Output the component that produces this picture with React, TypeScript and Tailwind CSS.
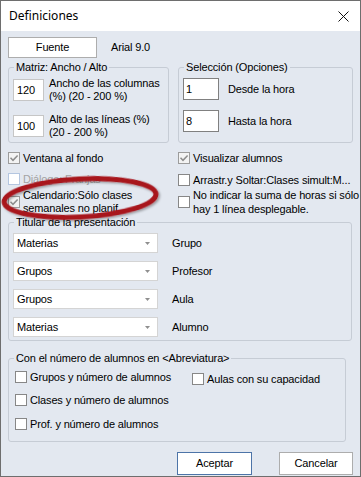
import React from "react";

// Small Windows-style checkbox. Three looks: unchecked, checked (greyed tick), disabled.
function Check({ checked, disabled }: { checked?: boolean; disabled?: boolean }) {
  const box = disabled
    ? "border-[#b4c6e0] bg-white"
    : checked
      ? "border-[#9c9c9c] bg-[#f3f3f3]"
      : "border-[#878787] bg-white";
  return (
    <span className={`flex size-[12px] shrink-0 items-center justify-center border ${box}`}>
      {checked && (
        <svg width="10" height="10" viewBox="0 0 10 10">
          <path d="M1.5 4.8 L4 7.3 L8.6 2.4" fill="none" stroke="#8d8d8d" strokeWidth="1.5" />
        </svg>
      )}
    </span>
  );
}

// Group box with the caption cut into the top border.
function GroupBox({
  title,
  className,
  children,
}: {
  title: string;
  className: string;
  children: React.ReactNode;
}) {
  return (
    <fieldset className={`rounded-[3px] border border-[#c6ccd5] ${className}`}>
      <legend className="ml-[5px] px-[2px] leading-[14px]">{title}</legend>
      {children}
    </fieldset>
  );
}

// Combo box look: white field, tiny grey arrow on the right.
function Combo({ value, label }: { value: string; label: string }) {
  return (
    <div className="flex items-center">
      <div className="flex h-[20px] w-[145px] items-center justify-between border border-[#d4d4d4] bg-white pl-[3px] pr-[7px]">
        <span>{value}</span>
        <svg width="5" height="3" viewBox="0 0 5 3">
          <path d="M0 0 H5 L2.5 3 Z" fill="#8f8f8f" />
        </svg>
      </div>
      <span className="ml-[14px]">{label}</span>
    </div>
  );
}

const TITLE_ROWS = [
  { value: "Materias", label: "Grupo" },
  { value: "Grupos", label: "Profesor" },
  { value: "Grupos", label: "Aula" },
  { value: "Materias", label: "Alumno" },
];

export default function App(): React.ReactElement {
  return (
    <div className="relative flex h-[477px] w-[361px] flex-col overflow-hidden whitespace-nowrap border border-[#6e6e6e] font-['Liberation_Sans',Arial,sans-serif] text-[11px] tracking-[-0.15px] text-black">
      {/* Title bar */}
      <div className="flex h-[30px] shrink-0 items-center justify-between bg-white pl-[8px] pr-[11px] font-['Noto_Sans',sans-serif] text-[12px] tracking-normal">
        <span>Definiciones</span>
        <svg width="11" height="11" viewBox="0 0 11 11">
          <path d="M0.5 0.5 L10.5 10.5 M10.5 0.5 L0.5 10.5" stroke="#111" strokeWidth="1" />
        </svg>
      </div>

      {/* Dialog body */}
      <div className="flex flex-1 flex-col bg-[#e3e8f0] pl-[7px] pr-[7px] pt-[6px]">
        <div className="flex items-center">
          <div className="flex h-[21px] w-[89px] items-center justify-center border border-[#adadad] bg-white">
            Fuente
          </div>
          <span className="ml-[14px]">Arial 9.0</span>
        </div>

        <div className="mt-[2px] flex">
          <GroupBox title="Matriz: Ancho / Alto" className="h-[83px] w-[161px]">
            <div className="flex flex-col pl-[4px] pt-[3px]">
              <div className="flex items-center">
                <div className="flex h-[22px] w-[31px] items-center border border-[#c6c6c6] bg-white pl-[3px]">120</div>
                <span className="ml-[5px] leading-[13px]">
                  Ancho de las columnas
                  <br />
                  (%) (20 - 200 %)
                </span>
              </div>
              <div className="mt-[10px] flex items-center">
                <div className="flex h-[22px] w-[31px] items-center border border-[#c6c6c6] bg-white pl-[3px]">100</div>
                <span className="ml-[5px] leading-[13px]">
                  Alto de las líneas (%)
                  <br />
                  (20 - 200 %)
                </span>
              </div>
            </div>
          </GroupBox>

          <GroupBox title="Selección (Opciones)" className="ml-[9px] h-[83px] w-[175px]">
            <div className="flex flex-col pl-[4px] pt-[4px]">
              <div className="flex items-center">
                <div className="flex h-[22px] w-[36px] items-center border border-[#808080] bg-white pl-[2px]">1</div>
                <span className="ml-[9px]">Desde la hora</span>
              </div>
              <div className="mt-[10px] flex items-center">
                <div className="flex h-[22px] w-[36px] items-center border border-[#808080] bg-white pl-[2px]">8</div>
                <span className="ml-[9px]">Hasta la hora</span>
              </div>
            </div>
          </GroupBox>
        </div>

        {/* Loose check boxes, two columns */}
        <div className="mt-[7px] grid h-[65px] grid-cols-[170px_1fr]">
          <div className="flex flex-col">
            <label className="flex h-[16px] items-center gap-[3px]">
              <Check checked />
              Ventana al fondo
            </label>
            <label className="mt-[5px] flex h-[16px] items-center gap-[3px] text-[#a3a3a3]">
              <Check disabled />
              Diálogo: Franjas
            </label>
            <label className="mt-[1px] flex h-[28px] items-center gap-[3px] leading-[13px]">
              <Check checked />
              <span>
                Calendario:Sólo clases
                <br />
                semanales no planif.
              </span>
            </label>
          </div>
          <div className="flex flex-col">
            <label className="flex h-[16px] items-center gap-[3px]">
              <Check checked />
              Visualizar alumnos
            </label>
            <label className="mt-[6px] flex h-[16px] items-center gap-[3px]">
              <Check />
              Arrastr.y Soltar:Clases simult:M...
            </label>
            <label className="flex h-[28px] items-center gap-[3px] leading-[14px]">
              <Check />
              <span>
                No indicar la suma de horas si sólo
                <br />
                hay 1 línea desplegable.
              </span>
            </label>
          </div>
        </div>

        <GroupBox title="Titular de la presentación" className="w-[344px]">
          <div className="flex flex-col gap-[8px] pb-[3px] pl-[4px] pt-[4px]">
            {TITLE_ROWS.map((row) => (
              <Combo key={row.label} value={row.value} label={row.label} />
            ))}
          </div>
        </GroupBox>

        <GroupBox title="Con el número de alumnos en <Abreviatura>" className="mt-[10px] w-[338px]">
          <div className="grid grid-cols-[177px_1fr] pb-[9px] pl-[6px] pt-[4px]">
            <div className="flex flex-col">
              <label className="flex h-[16px] items-center gap-[3px]">
                <Check />
                Grupos y número de alumnos
              </label>
              <label className="mt-[7px] flex h-[16px] items-center gap-[3px]">
                <Check />
                Clases y número de alumnos
              </label>
              <label className="mt-[8px] flex h-[16px] items-center gap-[3px]">
                <Check />
                Prof. y número de alumnos
              </label>
            </div>
            <div>
              <label className="mt-[2px] flex h-[16px] items-center gap-[3px]">
                <Check />
                Aulas con su capacidad
              </label>
            </div>
          </div>
        </GroupBox>

        <div className="mt-[10px] flex justify-end gap-[27px]">
          <div className="flex h-[23px] w-[75px] items-center justify-center border border-[#4d74a8] bg-white">
            Aceptar
          </div>
          <div className="flex h-[23px] w-[74px] items-center justify-center border border-[#adadad] bg-white">
            Cancelar
          </div>
        </div>
      </div>

      {/* Red hand-drawn highlight laid over the "Calendario" option */}
      <svg className="pointer-events-none absolute left-0 top-[165px]" width="170" height="62" viewBox="0 0 170 62">
        <defs>
          <filter id="shadow" x="-10%" y="-30%" width="120%" height="160%">
            <feDropShadow dx="1.5" dy="1.5" stdDeviation="1.2" floodColor="#000" floodOpacity="0.35" />
          </filter>
        </defs>
        <ellipse
          cx="79"
          cy="32"
          rx="76"
          ry="19"
          transform="rotate(-3 79 32)"
          fill="none"
          stroke="#a8131b"
          strokeWidth="5"
          filter="url(#shadow)"
        />
      </svg>
    </div>
  );
}
